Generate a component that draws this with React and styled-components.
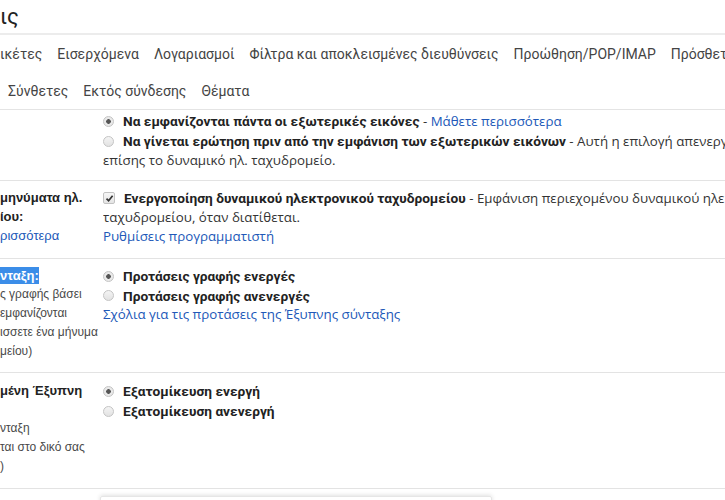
import styled, { createGlobalStyle } from "styled-components";

const GlobalStyle = createGlobalStyle`
  body {
    margin: 0;
    background: #ffffff;
    font-family: "Liberation Sans", Arial, sans-serif;
    overflow: hidden;
  }
`;

const firstTabs = ["ικέτες", "Εισερχόμενα", "Λογαριασμοί", "Φίλτρα και αποκλεισμένες διευθύνσεις", "Προώθηση/POP/IMAP", "Πρόσθετα"];
const secondTabs = ["Σύνθετες", "Εκτός σύνδεσης", "Θέματα"];

function Radio({ checked }) {
  return <RadioDot checked={checked} />;
}

function Checkbox() {
  return (
    <CheckBox>
      <svg width="9" height="9" viewBox="0 0 9 9">
        <path d="M1.5 4.6 L3.6 6.8 L7.6 1.8" fill="none" stroke="#333" strokeWidth="1.7" />
      </svg>
    </CheckBox>
  );
}

function Option({ checked, tight, children }) {
  return (
    <OptionLine tight={tight}>
      <Radio checked={checked} />
      <span>{children}</span>
    </OptionLine>
  );
}

export default function App() {
  return (
    <>
      <GlobalStyle />
      <Page>
        <TitleBar>ις</TitleBar>
        <TabRow>
          {firstTabs.map((t) => (
            <Tab key={t}>{t}</Tab>
          ))}
        </TabRow>
        <TabRow last indent={8}>
          {secondTabs.map((t) => (
            <Tab key={t}>{t}</Tab>
          ))}
        </TabRow>

        <SettingRow top={1} bottom={10}>
          <LabelCol />
          <ContentCol>
            <Option checked>
              <b>Να εμφανίζονται πάντα οι εξωτερικές εικόνες</b> - <Link>Μάθετε περισσότερα</Link>
            </Option>
            <Option>
              <b>Να γίνεται ερώτηση πριν από την εμφάνιση των εξωτερικών εικόνων</b> - Αυτή η επιλογή απενεργοποιεί
            </Option>
            <Line>επίσης το δυναμικό ηλ. ταχυδρομείο.</Line>
          </ContentCol>
        </SettingRow>

        <SettingRow top={7} bottom={12}>
          <LabelCol>
            <LabelLine>μηνύματα ηλ.</LabelLine>
            <LabelLine>ίου:</LabelLine>
            <LabelLine plain>
              <Link>ρισσότερα</Link>
            </LabelLine>
          </LabelCol>
          <ContentCol>
            <OptionLine>
              <Checkbox />
              <span>
                <b>Ενεργοποίηση δυναμικού ηλεκτρονικού ταχυδρομείου</b> - Εμφάνιση περιεχομένου δυναμικού ηλεκτρονικού
              </span>
            </OptionLine>
            <Line>ταχυδρομείου, όταν διατίθεται.</Line>
            <Line>
              <Link>Ρυθμίσεις προγραμματιστή</Link>
            </Line>
          </ContentCol>
        </SettingRow>

        <SettingRow top={7} bottom={11}>
          <LabelCol>
            <LabelLine>
              <Selected>νταξη:</Selected>
            </LabelLine>
            <Hint>ς γραφής βάσει</Hint>
            <Hint>εμφανίζονται</Hint>
            <Hint>ισσετε ένα μήνυμα</Hint>
            <Hint>μείου)</Hint>
          </LabelCol>
          <ContentCol>
            <Option checked>
              <b>Προτάσεις γραφής ενεργές</b>
            </Option>
            <Option tight>
              <b>Προτάσεις γραφής ανενεργές</b>
            </Option>
            <Line>
              <Link>Σχόλια για τις προτάσεις της Έξυπνης σύνταξης</Link>
            </Line>
          </ContentCol>
        </SettingRow>

        <SettingRow top={8} bottom={12}>
          <LabelCol>
            <LabelLine>μένη Έξυπνη</LabelLine>
            <LabelLine />
            <Hint>νταξη</Hint>
            <Hint>ται στο δικό σας</Hint>
            <Hint>)</Hint>
          </LabelCol>
          <ContentCol>
            <Option checked>
              <b>Εξατομίκευση ενεργή</b>
            </Option>
            <Option>
              <b>Εξατομίκευση ανενεργή</b>
            </Option>
          </ContentCol>
        </SettingRow>

        <BottomRow>
          <EditorBox />
        </BottomRow>
      </Page>
    </>
  );
}

const Page = styled.div`
  width: 725px;
  height: 500px;
  overflow: hidden;
  color: #222222;
  font-size: 13px;
`;

const TitleBar = styled.div`
  height: 33px;
  display: flex;
  align-items: center;
  font-family: Roboto, "Liberation Sans", sans-serif;
  font-size: 22px;
  color: #222222;
  border-bottom: 2px solid #ececec;
`;

const TabRow = styled.div`
  height: 37px;
  display: flex;
  align-items: center;
  gap: 15px;
  padding-left: ${({ indent }) => indent || 0}px;
  white-space: nowrap;
  border-bottom: ${({ last }) => (last ? "1px solid #e4e4e4" : "none")};
`;

const Tab = styled.span`
  font-family: Roboto, "Liberation Sans", sans-serif;
  font-size: 14px;
  color: #444444;
`;

const SettingRow = styled.div`
  display: grid;
  grid-template-columns: 103px 1fr;
  padding: ${({ top }) => top}px 0 ${({ bottom }) => bottom}px;
  border-bottom: 1px solid #e3e3e3;
  white-space: nowrap;
`;

const LabelCol = styled.div`
  display: flex;
  flex-direction: column;
  overflow: hidden;
`;

const LabelLine = styled.div`
  height: 19px;
  line-height: 19px;
  font-weight: ${({ plain }) => (plain ? 400 : 700)};
  font-size: 13px;
`;

const Selected = styled.span`
  background: #3b8de8;
  color: #ffffff;
  padding: 1px 0;
`;

const Hint = styled.div`
  height: 19px;
  line-height: 19px;
  font-size: 12px;
  color: #4a4a4a;
`;

const ContentCol = styled.div`
  display: flex;
  flex-direction: column;
  overflow: hidden;
  font-family: "Open Sans", "Liberation Sans", sans-serif;
  font-size: 13.3px;
  color: #333333;

  b {
    font-family: Roboto, "Liberation Sans", sans-serif;
    font-size: 13.7px;
    font-weight: 700;
    color: #222222;
  }
`;

const OptionLine = styled.div`
  height: ${({ tight }) => (tight ? 19 : 20)}px;
  display: flex;
  align-items: center;
  gap: 9px;
`;

const Line = styled.div`
  height: 19px;
  line-height: 19px;
`;

const Link = styled.span`
  color: #2158b8;
`;

const RadioDot = styled.span`
  flex: none;
  width: 11px;
  height: 11px;
  border-radius: 50%;
  box-sizing: border-box;
  border: 1px solid #c4c4c4;
  background: ${({ checked }) =>
    checked
      ? "radial-gradient(circle, #555 0 2px, #e9e9e9 2.6px)"
      : "linear-gradient(#f4f4f4, #e2e2e2)"};
`;

const CheckBox = styled.span`
  flex: none;
  width: 12px;
  height: 12px;
  box-sizing: border-box;
  border: 1px solid #c2c2c2;
  border-radius: 2px;
  background: linear-gradient(#f6f6f6, #e4e4e4);
  display: flex;
  align-items: center;
  justify-content: center;
`;

const BottomRow = styled.div`
  padding: 7px 0 0 100px;
`;

const EditorBox = styled.div`
  width: 390px;
  height: 40px;
  border: 1px solid #e6e6e6;
  border-radius: 2px;
  box-shadow: 0 -1px 4px rgba(0, 0, 0, 0.12);
`;
